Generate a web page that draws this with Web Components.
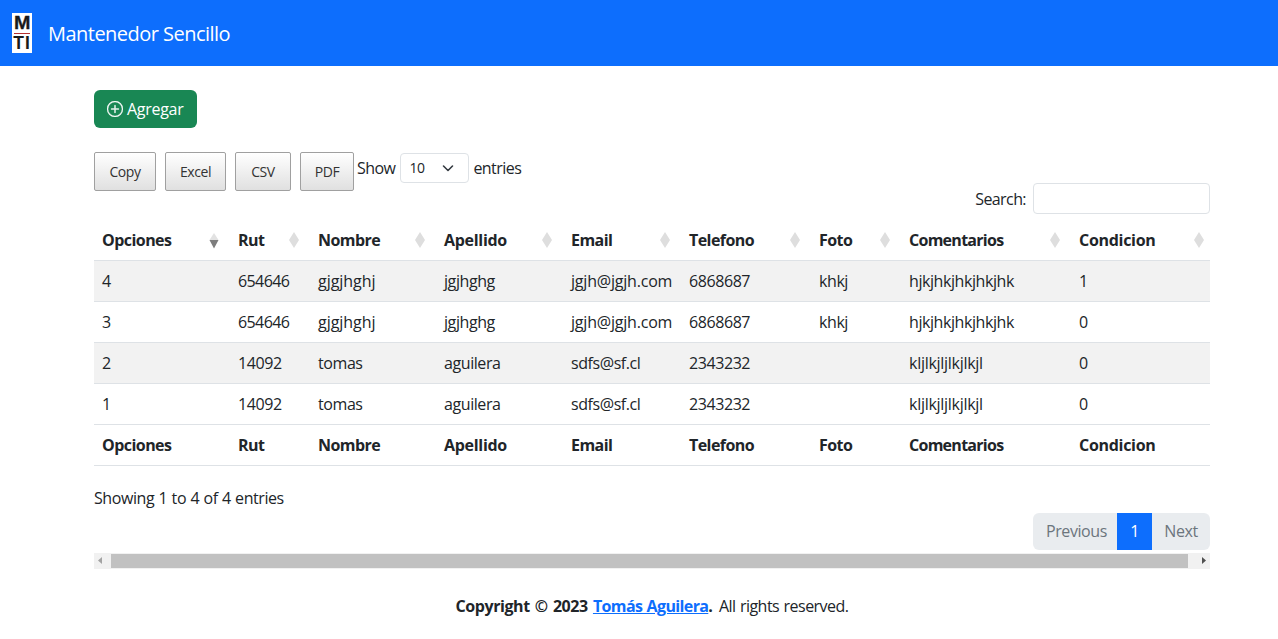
<!DOCTYPE html>
<html lang="es"><head><meta charset="utf-8"><title>Mantenedor Sencillo</title>
<style>
html,body{margin:0;padding:0;background:#fff}
body{font:16px/24px "Open Sans","Noto Sans",sans-serif;letter-spacing:-.42px;color:#212529;height:639px;overflow:hidden}
</style></head><body>
<app-navbar>Mantenedor Sencillo</app-navbar>
<app-page>
  <add-button>Agregar</add-button>
  <dt-toolbar></dt-toolbar>
  <dt-table></dt-table>
  <dt-bottom></dt-bottom>
  <app-footer></app-footer>
</app-page>
<script>
function def(name,html){
  customElements.define(name,class extends HTMLElement{
    constructor(){super();this.attachShadow({mode:'open'}).innerHTML=html;}
  });
}
def('app-navbar',`<style>
:host{display:flex;align-items:center;height:66px;background:#0d6efd;color:#fff;padding-left:12px;box-sizing:border-box}
svg{display:block;margin-right:16px}
span{font-size:20px;letter-spacing:-.53px;margin-top:2px}
</style>
<svg width="20" height="40" viewBox="0 0 20 40"><rect width="20" height="40" fill="#fff"/>
<text x="10" y="16" text-anchor="middle" font-family="Liberation Sans" font-weight="700" font-size="17.500" textLength="16" lengthAdjust="spacingAndGlyphs" fill="#1a1a1a" stroke="#1a1a1a" stroke-width=".3">M</text>
<rect x="2" y="20" width="16" height="1" fill="#b5302f"/>
<text x="10" y="36" text-anchor="middle" font-family="Liberation Sans" font-weight="700" font-size="17.500" fill="#1a1a1a" letter-spacing="1">TI</text></svg>
<span><slot></slot></span>`);
def('app-page',`<style>:host{display:block;padding:24px 68px 0 94px}</style><slot></slot>`);
def('add-button',`<style>
:host{display:inline-flex;align-items:center;height:38px;width:103px;box-sizing:border-box;padding-left:13px;background:#198754;border-radius:6px;color:#fff;vertical-align:top;letter-spacing:-.28px}
svg{margin-right:4px;display:block}
</style>
<svg width="16" height="16" viewBox="0 0 16 16" fill="#fff" stroke="#fff" stroke-width=".35"><path d="M8 15A7 7 0 1 1 8 1a7 7 0 0 1 0 14zm0 1A8 8 0 1 0 8 0a8 8 0 0 0 0 16z"/><path d="M8 4a.5.5 0 0 1 .5.5v3h3a.5.5 0 0 1 0 1h-3v3a.5.5 0 0 1-1 0v-3h-3a.5.5 0 0 1 0-1h3v-3A.5.5 0 0 1 8 4z"/></svg>
<slot></slot>`);
def('dt-btn',`<style>
:host{display:flex;align-items:center;justify-content:center;height:39px;box-sizing:border-box;border:1px solid #a0a0a0;border-radius:2px;font-size:14px;letter-spacing:-.4px;color:#333;background:linear-gradient(to bottom,#fff 0%,#e0e0e0 100%)}
</style><slot></slot>`);
def('dt-toolbar',`<style>
:host{display:block;margin-top:24px;height:68px}
.top{display:flex;align-items:flex-start;height:38px}
dt-btn{margin-right:9px}
.len{display:flex;align-items:center;height:31px;margin-left:-6px;letter-spacing:-.55px}
.sel{display:flex;align-items:center;justify-content:space-between;box-sizing:border-box;width:69px;height:30px;margin:1px 4px 0 5px;padding:0 14px 0 8px;border:1px solid #dee2e6;border-radius:4px;font-size:14px;background:#fff}
.search{display:flex;justify-content:flex-end;align-items:center;margin-top:-7px;letter-spacing:-.58px}
.input{width:177px;height:31px;box-sizing:border-box;border:1px solid #dee2e6;border-radius:4px;margin-left:7px;background:#fff}
</style>
<div class="top">
<dt-btn style="width:62px">Copy</dt-btn><dt-btn style="width:61px">Excel</dt-btn><dt-btn style="width:56px">CSV</dt-btn><dt-btn style="width:54px">PDF</dt-btn>
<div class="len"><span>Show</span><div class="sel"><span>10</span><svg width="12" height="8" viewBox="0 0 12 8" fill="none" stroke="#343a40" stroke-width="1.6" stroke-linecap="round" stroke-linejoin="round"><path d="M1.5 2 6 6.500 10.500 2"/></svg></div><span>entries</span></div>
</div>
<div class="search"><span>Search:</span><div class="input"></div></div>`);
const cols=['Opciones','Rut','Nombre','Apellido','Email','Telefono','Foto','Comentarios','Condicion'];
const hls=[-.55,-.55,-.55,-.3,-.55,-.55,-.55,-.73,-.3];
const widths=[136,80,126,127,118,130,90,170,139];
const rows=[['4','654646','gjgjhghj','jgjhghg','jgjh@jgjh.com','6868687','khkj','hjkjhkjhkjhkjhk','1'],
['3','654646','gjgjhghj','jgjhghg','jgjh@jgjh.com','6868687','khkj','hjkjhkjhkjhkjhk','0'],
['2','14092','tomas','aguilera','sdfs@sf.cl','2343232','','kljlkjljlkjlkjl','0'],
['1','14092','tomas','aguilera','sdfs@sf.cl','2343232','','kljlkjljlkjlkjl','0']];
const ico=(a)=>a?`<svg width="12" height="18" viewBox="0 0 12 18"><path d="M6 2 10.500 9h-9z" fill="#e2e2e2"/><path d="M1.500 9h9L6 17.500z" fill="#7d7d7d"/></svg>`:`<svg width="12" height="18" viewBox="0 0 12 18"><path d="M6 1 11 9 6 17 1 9z" fill="#dedede"/></svg>`;
const ls=c=>c==='gjgjhghj'?'-.05px':c==='jgjh@jgjh.com'?'-.2px':c==='sdfs@sf.cl'?'-.42px':c==='kljlkjljlkjlkjl'?'-.28px':c==='654646'?'-.6px':'-.42px';
def('dt-table',`<style>
:host{display:block}
table{border-collapse:collapse;table-layout:fixed;width:1116px}
th,td{padding:0 8px;height:41px;box-sizing:border-box;text-align:left;border-bottom:1px solid #dee2e6;white-space:nowrap;font-weight:400}
th{font-weight:700}
thead th{height:40px}
tbody tr:nth-child(odd) td{background:#f2f2f2}
.h{display:flex;justify-content:space-between;align-items:center;margin-right:2px}
th:last-child .h{margin-right:-3px}
svg{display:block}
</style>
<table><colgroup>${widths.map(w=>`<col style="width:${w}px">`).join('')}</colgroup>
<thead><tr>${cols.map((c,i)=>`<th><div class="h"><span style="letter-spacing:${hls[i]}px">${c}</span>${ico(i==0)}</div></th>`).join('')}</tr></thead>
<tbody>${rows.map(r=>`<tr>${r.map(c=>`<td style="letter-spacing:${ls(c)}">${c}</td>`).join('')}</tr>`).join('')}</tbody>
<tfoot><tr>${cols.map((c,i)=>`<th style="letter-spacing:${hls[i]}px">${c}</th>`).join('')}</tr></tfoot></table>`);
def('dt-bottom',`<style>
:host{display:block;width:1116px;margin-top:20px}
.info{word-spacing:.6px}
.pg{display:flex;justify-content:flex-end;margin-top:3px}
.p{display:flex;align-items:center;height:37px;box-sizing:border-box;background:#e9ecef;color:#6c757d}
.a{padding-left:13px;border-radius:6px 0 0 6px;width:84px;box-sizing:border-box}
.b{width:35px;justify-content:center;background:#0d6efd;color:#fff}
.c{width:58px;justify-content:center;border-radius:0 6px 6px 0}
.bar{display:flex;align-items:center;height:16px;margin-top:3px;background:#f1f1f1}
.thumb{flex:1;height:14px;background:#c1c1c1;margin:0 10px 0 5px}
.arr{width:12px;height:16px;display:flex;align-items:center;justify-content:center}
.arr svg{display:block}
</style>
<div class="info">Showing 1 to 4 of 4 entries</div>
<div class="pg"><div class="p a">Previous</div><div class="p b">1</div><div class="p c">Next</div></div>
<div class="bar"><div class="arr"><svg width="4" height="7"><path d="M4 0v7L0 3.500z" fill="#a3a3a3"/></svg></div><div class="thumb"></div><div class="arr"><svg width="4" height="7"><path d="M0 0v7l4-3.500z" fill="#505050"/></svg></div></div>`);
def('app-footer',`<style>
:host{display:block;width:1116px;margin-top:25px;text-align:center}
b{font-weight:700;letter-spacing:-.42px;word-spacing:1.400px;margin-right:2px}
a{color:#0d6efd;text-decoration:underline;letter-spacing:-.63px;word-spacing:.8px}
.r{letter-spacing:-.53px;word-spacing:.8px}
</style><span><b>Copyright © 2023 <a href="#">Tomás Aguilera</a>.</b><span class="r"> All rights reserved.</span></span>`);
</script>
</body></html>
